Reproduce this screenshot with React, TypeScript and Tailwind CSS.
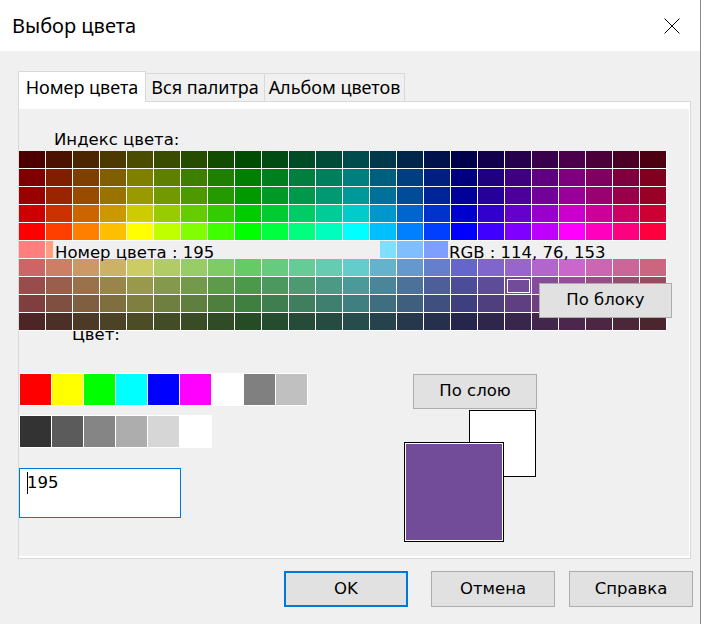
import React from "react";

// AutoCAD index colours 10..249: 24 hues, 10 shades each
const SHADES: [number, boolean][] = [
  [0.3, false],
  [0.5, false],
  [0.6, false],
  [0.8, false],
  [1, false],
  [1, true],
  [0.8, true],
  [0.6, true],
  [0.5, true],
  [0.3, true],
];

function hueRgb(deg: number): number[] {
  const h = deg / 60;
  const sector = Math.floor(h);
  const f = h - sector;
  const up = Math.floor(255 * f);
  const down = Math.floor(255 * (1 - f));
  switch (sector) {
    case 0:
      return [255, up, 0];
    case 1:
      return [down, 255, 0];
    case 2:
      return [0, 255, up];
    case 3:
      return [0, down, 255];
    case 4:
      return [up, 0, 255];
    default:
      return [255, 0, down];
  }
}

function aciColor(col: number, row: number): string {
  const [factor, pastel] = SHADES[row];
  const rgb = hueRgb(col * 15).map((c) => {
    const base = pastel ? c + Math.floor((255 - c) / 2) : c;
    return Math.floor(base * factor);
  });
  return `rgb(${rgb[0]}, ${rgb[1]}, ${rgb[2]})`;
}

const SELECTED = { col: 18, row: 7 };

const STANDARD = ["#ff0000", "#ffff00", "#00ff00", "#00ffff", "#0000ff", "#ff00ff", "#ffffff", "#808080", "#c0c0c0"];
const GRAYS = ["#333333", "#5b5b5b", "#858585", "#adadad", "#d6d6d6", "#ffffff"];

function Swatches({ colors }: { colors: string[] }) {
  return (
    <div className="flex w-fit gap-px bg-white p-px">
      {colors.map((c, i) => (
        <div key={i} className="h-[31px] w-[31px]" style={{ backgroundColor: c }} />
      ))}
    </div>
  );
}

function Button({ label, className = "" }: { label: string; className?: string }) {
  return (
    <div
      className={`flex h-[36px] w-[124px] items-center justify-center bg-[#e1e1e1] ${className}`}
    >
      {label}
    </div>
  );
}

export default function App() {
  const cells: React.ReactNode[] = [];
  for (let row = 0; row < 10; row++) {
    for (let col = 0; col < 24; col++) {
      const selected = row === SELECTED.row && col === SELECTED.col;
      cells.push(
        <div key={`${row}-${col}`} className="relative" style={{ backgroundColor: aciColor(col, row) }}>
          {selected && <div className="absolute bottom-px left-[2px] right-px top-[2px] border border-white" />}
        </div>
      );
    }
  }

  return (
    <div className="flex h-[624px] w-[701px] flex-col overflow-hidden border-r border-[#8a8a8a] bg-[#f0f0f0] font-['DejaVu_Sans',sans-serif] text-[16.5px] text-black">
      {/* Title bar */}
      <div className="flex h-[51px] shrink-0 items-center justify-between bg-white pl-[12px] pr-[20px]">
        <span className="font-['Noto_Sans',sans-serif] text-[20px] leading-none">Выбор цвета</span>
        <svg width="16" height="16" viewBox="0 0 16 16">
          <path d="M0.5 0.5 L15.5 15.5 M15.5 0.5 L0.5 15.5" stroke="#000" strokeWidth="1" fill="none" />
        </svg>
      </div>

      {/* Tabs */}
      <div className="mt-[20px] flex h-[30px] shrink-0 items-end pl-[18px] font-['Noto_Sans',sans-serif] text-[18px]">
        <div className="relative z-20 -mb-px flex h-[31px] w-[128px] items-center justify-center border border-b-0 border-[#d9d9d9] bg-white">
          Номер цвета
        </div>
        <div className="flex h-[28px] w-[119px] items-center justify-center border-r border-t border-[#d9d9d9]">
          Вся палитра
        </div>
        <div className="flex h-[28px] w-[140px] items-center justify-center border-r border-t border-[#d9d9d9]">
          Альбом цветов
        </div>
      </div>

      {/* Tab panel */}
      <div className="ml-[18px] h-[458px] w-[673px] shrink-0 border border-[#d9d9d9] bg-white pb-[2px] pr-px pt-[7px]">
        <div className="h-full bg-[#f0f0f0]">
          <div className="pl-[35px] pt-[22px] leading-[18px]">Индекс цвета:</div>

          {/* Index colour grid */}
          <div className="relative z-10 mt-[2px] w-[648px] bg-white pb-px pr-px">
            <div className="grid grid-cols-[repeat(24,26px)] grid-rows-[repeat(10,17px)] gap-px">{cells}</div>

            <div className="absolute left-[34px] top-[90px] h-[18px] w-[327px] whitespace-nowrap bg-[#f0f0f0] pl-[2px] pt-[3px] leading-[18px]">
              Номер цвета : 195
            </div>
            <div className="absolute left-[429px] top-[90px] h-[18px] w-[220px] whitespace-nowrap bg-[#f0f0f0] pl-px pt-[3px] leading-[18px]">
              RGB : 114, 76, 153
            </div>
            <div className="absolute left-[520px] top-[132px] flex h-[35px] w-[133px] items-center justify-center border border-[#adadad] bg-[#e1e1e1]">
              По блоку
            </div>
          </div>

          <div className="relative -mt-[5px] pl-[53px] leading-[18px]">Цвет:</div>

          <div className="mt-[29px] flex">
            <div className="flex flex-col">
              <Swatches colors={STANDARD} />
              <div className="mt-[9px]">
                <Swatches colors={GRAYS} />
              </div>
              <div className="relative mt-[20px] h-[50px] w-[162px] border border-[#0078d7] bg-white pl-[7px] pt-[5px] leading-[18px]">
                <div className="absolute left-[7px] top-[3px] h-[22px] w-px bg-black" />
                195
              </div>
            </div>

            {/* Preview */}
            <div className="ml-[96px] mt-px w-[132px]">
              <div className="ml-[9px] flex h-[35px] w-[124px] items-center justify-center border border-[#adadad] bg-[#e1e1e1]">
                По слою
              </div>
              <div className="relative h-[133px]">
                <div className="absolute left-[65px] top-px h-[67px] w-[67px] border border-black bg-white" />
                <div className="absolute left-0 top-[33px] h-[100px] w-[100px] border border-black bg-white p-px">
                  <div className="h-full w-full bg-[#724c99]" />
                </div>
              </div>
            </div>
          </div>
        </div>
      </div>

      {/* Dialog buttons */}
      <div className="mt-[12px] flex pl-[284px]">
        <Button label="OK" className="border-2 border-[#0078d7]" />
        <Button label="Отмена" className="ml-[23px] border border-[#adadad]" />
        <Button label="Справка" className="ml-[14px] border border-[#adadad]" />
      </div>
    </div>
  );
}
